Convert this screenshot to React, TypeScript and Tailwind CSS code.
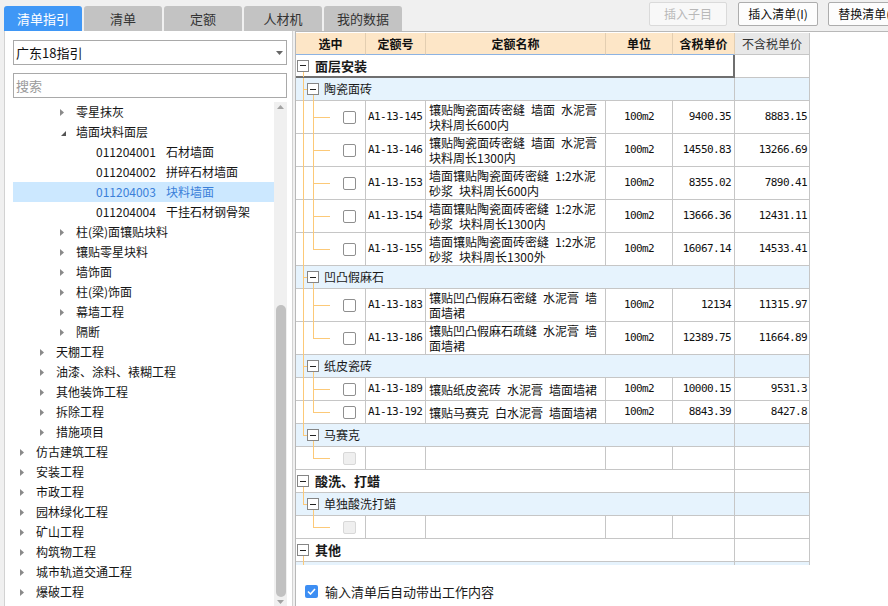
import React from 'react';

type TreeNode = {
  label: string;
  code?: string;
  depth: 1 | 2 | 3 | 4;
  state: 'open' | 'closed' | 'leaf';
  selected?: boolean;
};

const TREE: TreeNode[] = [
  { label: '零星抹灰', depth: 3, state: 'closed' },
  { label: '墙面块料面层', depth: 3, state: 'open' },
  { code: '011204001', label: '石材墙面', depth: 4, state: 'leaf' },
  { code: '011204002', label: '拼碎石材墙面', depth: 4, state: 'leaf' },
  { code: '011204003', label: '块料墙面', depth: 4, state: 'leaf', selected: true },
  { code: '011204004', label: '干挂石材钢骨架', depth: 4, state: 'leaf' },
  { label: '柱(梁)面镶贴块料', depth: 3, state: 'closed' },
  { label: '镶贴零星块料', depth: 3, state: 'closed' },
  { label: '墙饰面', depth: 3, state: 'closed' },
  { label: '柱(梁)饰面', depth: 3, state: 'closed' },
  { label: '幕墙工程', depth: 3, state: 'closed' },
  { label: '隔断', depth: 3, state: 'closed' },
  { label: '天棚工程', depth: 2, state: 'closed' },
  { label: '油漆、涂料、裱糊工程', depth: 2, state: 'closed' },
  { label: '其他装饰工程', depth: 2, state: 'closed' },
  { label: '拆除工程', depth: 2, state: 'closed' },
  { label: '措施项目', depth: 2, state: 'closed' },
  { label: '仿古建筑工程', depth: 1, state: 'closed' },
  { label: '安装工程', depth: 1, state: 'closed' },
  { label: '市政工程', depth: 1, state: 'closed' },
  { label: '园林绿化工程', depth: 1, state: 'closed' },
  { label: '矿山工程', depth: 1, state: 'closed' },
  { label: '构筑物工程', depth: 1, state: 'closed' },
  { label: '城市轨道交通工程', depth: 1, state: 'closed' },
  { label: '爆破工程', depth: 1, state: 'closed' },
];

const INDENT: Record<TreeNode['depth'], string> = {
  1: 'pl-[7px]',
  2: 'pl-[27px]',
  3: 'pl-[47px]',
  4: 'pl-[67px]',
};

type Line = 'none' | 'full' | 'top' | 'bottom';

type GroupRow = { kind: 'group'; level: 0 | 1; label: string; v0: Line; v1: Line; focus?: boolean };
type ItemRow = {
  kind: 'item';
  v0: Line;
  v1: Line;
  code?: string;
  name?: string[];
  unit?: string;
  price?: string;
  net?: string;
  tall?: boolean;
};
type TRow = GroupRow | ItemRow;

const ROWS: TRow[] = [
  { kind: 'group', level: 0, label: '面层安装', v0: 'bottom', v1: 'none', focus: true },
  { kind: 'group', level: 1, label: '陶瓷面砖', v0: 'full', v1: 'bottom' },
  { kind: 'item', v0: 'full', v1: 'full', tall: true, code: 'A1-13-145', name: ['镶贴陶瓷面砖密缝 墙面 水泥膏', '块料周长600内'], unit: '100m2', price: '9400.35', net: '8883.15' },
  { kind: 'item', v0: 'full', v1: 'full', tall: true, code: 'A1-13-146', name: ['镶贴陶瓷面砖密缝 墙面 水泥膏', '块料周长1300内'], unit: '100m2', price: '14550.83', net: '13266.69' },
  { kind: 'item', v0: 'full', v1: 'full', tall: true, code: 'A1-13-153', name: ['墙面镶贴陶瓷面砖密缝 1:2水泥', '砂浆 块料周长600内'], unit: '100m2', price: '8355.02', net: '7890.41' },
  { kind: 'item', v0: 'full', v1: 'full', tall: true, code: 'A1-13-154', name: ['墙面镶贴陶瓷面砖密缝 1:2水泥', '砂浆 块料周长1300内'], unit: '100m2', price: '13666.36', net: '12431.11' },
  { kind: 'item', v0: 'full', v1: 'top', tall: true, code: 'A1-13-155', name: ['墙面镶贴陶瓷面砖密缝 1:2水泥', '砂浆 块料周长1300外'], unit: '100m2', price: '16067.14', net: '14533.41' },
  { kind: 'group', level: 1, label: '凹凸假麻石', v0: 'full', v1: 'bottom' },
  { kind: 'item', v0: 'full', v1: 'full', tall: true, code: 'A1-13-183', name: ['镶贴凹凸假麻石密缝 水泥膏 墙', '面墙裙'], unit: '100m2', price: '12134', net: '11315.97' },
  { kind: 'item', v0: 'full', v1: 'top', tall: true, code: 'A1-13-186', name: ['镶贴凹凸假麻石疏缝 水泥膏 墙', '面墙裙'], unit: '100m2', price: '12389.75', net: '11664.89' },
  { kind: 'group', level: 1, label: '纸皮瓷砖', v0: 'full', v1: 'bottom' },
  { kind: 'item', v0: 'full', v1: 'full', code: 'A1-13-189', name: ['镶贴纸皮瓷砖 水泥膏 墙面墙裙'], unit: '100m2', price: '10000.15', net: '9531.3' },
  { kind: 'item', v0: 'full', v1: 'top', code: 'A1-13-192', name: ['镶贴马赛克 白水泥膏 墙面墙裙'], unit: '100m2', price: '8843.39', net: '8427.8' },
  { kind: 'group', level: 1, label: '马赛克', v0: 'top', v1: 'bottom' },
  { kind: 'item', v0: 'none', v1: 'top' },
  { kind: 'group', level: 0, label: '酸洗、打蜡', v0: 'bottom', v1: 'none' },
  { kind: 'group', level: 1, label: '单独酸洗打蜡', v0: 'top', v1: 'bottom' },
  { kind: 'item', v0: 'none', v1: 'top' },
  { kind: 'group', level: 0, label: '其他', v0: 'bottom', v1: 'none' },
  { kind: 'group', level: 1, label: '', v0: 'full', v1: 'bottom' },
];

const HEAD = [
  { label: '选中', w: 'w-[70px]' },
  { label: '定额号', w: 'w-[60px]' },
  { label: '定额名称', w: 'w-[180px]' },
  { label: '单位', w: 'w-[67px]' },
  { label: '含税单价', w: 'w-[62px]' },
];

const TABS = ['清单指引', '清单', '定额', '人材机', '我的数据'];

const MONO = "font-['DejaVu_Sans_Mono',monospace] text-[11px] tracking-[-0.6px]";

function Spaced({ text }: { text: string }) {
  const parts = text.split(' ');
  return (
    <>
      {parts.map((p, i) => (
        <React.Fragment key={i}>
          {i > 0 && <span className="inline-block w-[6px]" />}
          {p}
        </React.Fragment>
      ))}
    </>
  );
}

function VLine({ at, kind }: { at: 0 | 1; kind: Line }) {
  if (kind === 'none') return null;
  const x = at === 0 ? 'left-[7px]' : 'left-[17px]';
  const y = kind === 'full' ? 'top-0 -bottom-px' : kind === 'top' ? 'top-0 bottom-1/2' : 'top-1/2 -bottom-px';
  return <span className={`absolute w-px bg-[#fcc978] ${x} ${y}`} />;
}

function MinusBox({ level }: { level: 0 | 1 }) {
  return (
    <span
      className={`absolute top-1/2 -translate-y-1/2 ${
        level === 0 ? 'left-[1px]' : 'left-[11px]'
      } w-[12px] h-[12px] border border-[#858585] bg-white flex items-center justify-center`}
    >
      <span className="w-[6px] h-px bg-[#222]" />
    </span>
  );
}

function TreeArrow({ state }: { state: TreeNode['state'] }) {
  if (state === 'closed') {
    return (
      <svg width="4" height="7" viewBox="0 0 4 7">
        <path d="M0 0L4 3.5L0 7Z" fill="#8a8a8a" />
      </svg>
    );
  }
  if (state === 'open') {
    return (
      <svg width="5" height="5" viewBox="0 0 5 5" className="ml-[1px] mt-[2px]">
        <path d="M5 0V5H0Z" fill="#555" />
      </svg>
    );
  }
  return null;
}

function TopBar() {
  return (
    <div className="h-[31px] flex shrink-0 pl-[4px]">
      <div className="flex items-end gap-[2px] shrink-0">
        {TABS.map((t, i) => (
          <div
            key={t}
            className={`w-[78px] h-[25px] rounded-t-[3px] flex items-center justify-center text-[13px] ${
              i === 0 ? 'bg-[#3f97f6] text-white' : 'bg-[#c3c3c3] text-[#333]'
            }`}
          >
            {t}
          </div>
        ))}
      </div>
      <div className="ml-[247px] mt-[2px] h-[24px] flex shrink-0 text-[12px]">
        <div className="w-[78px] shrink-0 rounded-[2px] border border-[#dadada] bg-[#f8f8f8] text-[#b8b8b8] flex items-center justify-center">
          插入子目
        </div>
        <div className="ml-[11px] w-[80px] shrink-0 rounded-[2px] border border-[#adadad] bg-[#fdfdfd] text-[#111] flex items-center justify-center">
          插入清单(I)
        </div>
        <div className="ml-[10px] w-[84px] shrink-0 rounded-[2px] border border-[#adadad] bg-[#fdfdfd] text-[#111] flex items-center justify-center">
          替换清单(R)
        </div>
      </div>
    </div>
  );
}

function LeftPanel() {
  return (
    <div className="ml-[4px] w-[289px] shrink-0 bg-white border-l border-r border-[#d2d2d2] pl-[8px] pt-[9px] flex flex-col">
      <div className="w-[274px] h-[25px] shrink-0 border border-[#a9a9a9] flex items-center pl-[2px] pr-[3px] text-[13px] text-[#111]">
        <span className="flex-1">广东18指引</span>
        <svg width="7" height="4" viewBox="0 0 7 4">
          <path d="M0 0H7L3.5 4Z" fill="#666" />
        </svg>
      </div>
      <div className="mt-[8px] w-[274px] h-[25px] shrink-0 border border-[#a9a9a9] flex items-center pl-[2px] text-[13px] text-[#9a9a9a]">
        搜索
      </div>
      <div className="mt-[4px] flex flex-1 min-h-0 overflow-hidden">
        <div className="w-[261px] shrink-0 flex flex-col">
          {TREE.map((n, i) => (
            <div
              key={i}
              className={`h-[20px] shrink-0 flex items-center text-[12px] ${INDENT[n.depth]} ${
                n.selected ? 'bg-[#cce8ff] text-[#3b7fd9]' : 'text-[#151515]'
              }`}
            >
              <span className="w-[16px] shrink-0 flex items-center">
                <TreeArrow state={n.state} />
              </span>
              {n.code && <span className="mr-[10px]">{n.code}</span>}
              <span className="whitespace-nowrap">{n.label}</span>
            </div>
          ))}
        </div>
        <div className="w-[13px] shrink-0 bg-[#f0f0f0] flex flex-col items-center">
          <svg width="7" height="4" viewBox="0 0 7 4" className="mt-[3px] shrink-0">
            <path d="M0 4H7L3.5 0Z" fill="#a3a3a3" />
          </svg>
          <div className="h-[196px] shrink-0" />
          <div className="w-[10px] h-[292px] shrink-0 rounded-full bg-[#c1c1c1]" />
          <svg width="7" height="4" viewBox="0 0 7 4" className="mt-[3px] shrink-0">
            <path d="M0 0H7L3.5 4Z" fill="#a3a3a3" />
          </svg>
        </div>
      </div>
    </div>
  );
}

function GroupLine({ row }: { row: GroupRow }) {
  const cell = row.focus
    ? 'border-b-2 border-r-2 border-[#6f6f6f]'
    : 'border-b border-r border-[#c6c6c6]';
  const bg = row.level === 1 ? 'bg-[#e6f3fd]' : 'bg-white';
  const text = row.level === 0 ? 'pl-[19px] font-bold text-[13px]' : 'pl-[28px] text-[12px]';
  return (
    <div className="flex h-[23px] shrink-0">
      <div className={`relative w-[439px] flex items-center ${cell} ${bg} ${text} text-[#1a1a1a]`}>
        <VLine at={0} kind={row.v0} />
        <VLine at={1} kind={row.v1} />
        {row.level === 1 && <span className="absolute top-1/2 left-[7px] w-[5px] h-px bg-[#fcc978]" />}
        <MinusBox level={row.level} />
        {row.label && <span className="whitespace-nowrap">{row.label}</span>}
      </div>
      <div className={`w-[75px] border-b border-r border-[#c6c6c6] ${bg}`} />
    </div>
  );
}

function ItemLine({ row }: { row: ItemRow }) {
  const empty = !row.code;
  return (
    <div className={`flex shrink-0 text-[#111] ${row.tall ? 'h-[33px]' : 'h-[23px]'}`}>
      <div className="relative w-[70px] border-b border-r border-[#c6c6c6] flex items-center pl-[47px]">
        <VLine at={0} kind={row.v0} />
        <VLine at={1} kind={row.v1} />
        <span className="absolute top-1/2 left-[17px] w-[17px] h-px bg-[#fcc978]" />
        <span
          className={`w-[13px] h-[13px] rounded-[2px] border ${
            empty ? 'border-[#d8d8d8] bg-[#efefef]' : 'border-[#8f8f8f] bg-white'
          }`}
        />
      </div>
      <div className={`w-[60px] border-b border-r border-[#c6c6c6] flex items-center pl-[2px] ${MONO}`}>{row.code}</div>
      <div className="w-[180px] border-b border-r border-[#c6c6c6] flex flex-col justify-center pl-[3px] text-[12px] leading-[15px] overflow-hidden">
        {row.name?.map((l, i) => (
          <div key={i} className="whitespace-nowrap">
            <Spaced text={l} />
          </div>
        ))}
      </div>
      <div className={`w-[67px] border-b border-r border-[#c6c6c6] flex items-center justify-center ${MONO}`}>{row.unit}</div>
      <div className={`w-[62px] border-b border-r border-[#c6c6c6] flex items-center justify-end pr-[3px] ${MONO}`}>{row.price}</div>
      <div className={`w-[75px] border-b border-r border-[#c6c6c6] flex items-center justify-end pr-[2px] ${MONO}`}>{row.net}</div>
    </div>
  );
}

function RightPane() {
  return (
    <div className="ml-[2px] flex-1 min-w-0 bg-white border-t border-l border-[#b8b8b8] pt-[1px] flex flex-col">
      <div className="w-[514px] h-[532px] shrink-0 overflow-hidden flex flex-col">
        <div className="flex h-[22px] shrink-0">
          {HEAD.map((h) => (
            <div
              key={h.label}
              className={`${h.w} bg-[#fde6c7] border-r border-b border-[#e3ceb1] border-b-[#8db3e2] flex items-center justify-center text-[12px] font-bold text-[#111]`}
            >
              {h.label}
            </div>
          ))}
          <div className="w-[75px] bg-[#e8e8e8] border-r border-b border-[#c6c6c6] flex items-center justify-center text-[12px] text-[#333]">
            不含税单价
          </div>
        </div>
        {ROWS.map((r, i) =>
          r.kind === 'group' ? <GroupLine key={i} row={r} /> : <ItemLine key={i} row={r} />
        )}
      </div>
      <div className="mt-[20px] ml-[9px] h-[13px] flex items-center gap-[7px]">
        <span className="w-[13px] h-[13px] rounded-[2px] bg-[#3d8ef3] flex items-center justify-center">
          <svg width="9" height="7" viewBox="0 0 9 7">
            <path d="M1 3.5L3.5 6L8 1" fill="none" stroke="white" strokeWidth="1.6" />
          </svg>
        </span>
        <span className="text-[13px] leading-none text-[#1a1a1a]">输入清单后自动带出工作内容</span>
      </div>
    </div>
  );
}

export default function App() {
  return (
    <div className="w-[888px] h-[606px] overflow-hidden bg-[#f0f0f0] flex flex-col font-['Noto_Sans_CJK_SC',sans-serif]">
      <TopBar />
      <div className="flex flex-1 min-h-0">
        <LeftPanel />
        <RightPane />
      </div>
    </div>
  );
}
